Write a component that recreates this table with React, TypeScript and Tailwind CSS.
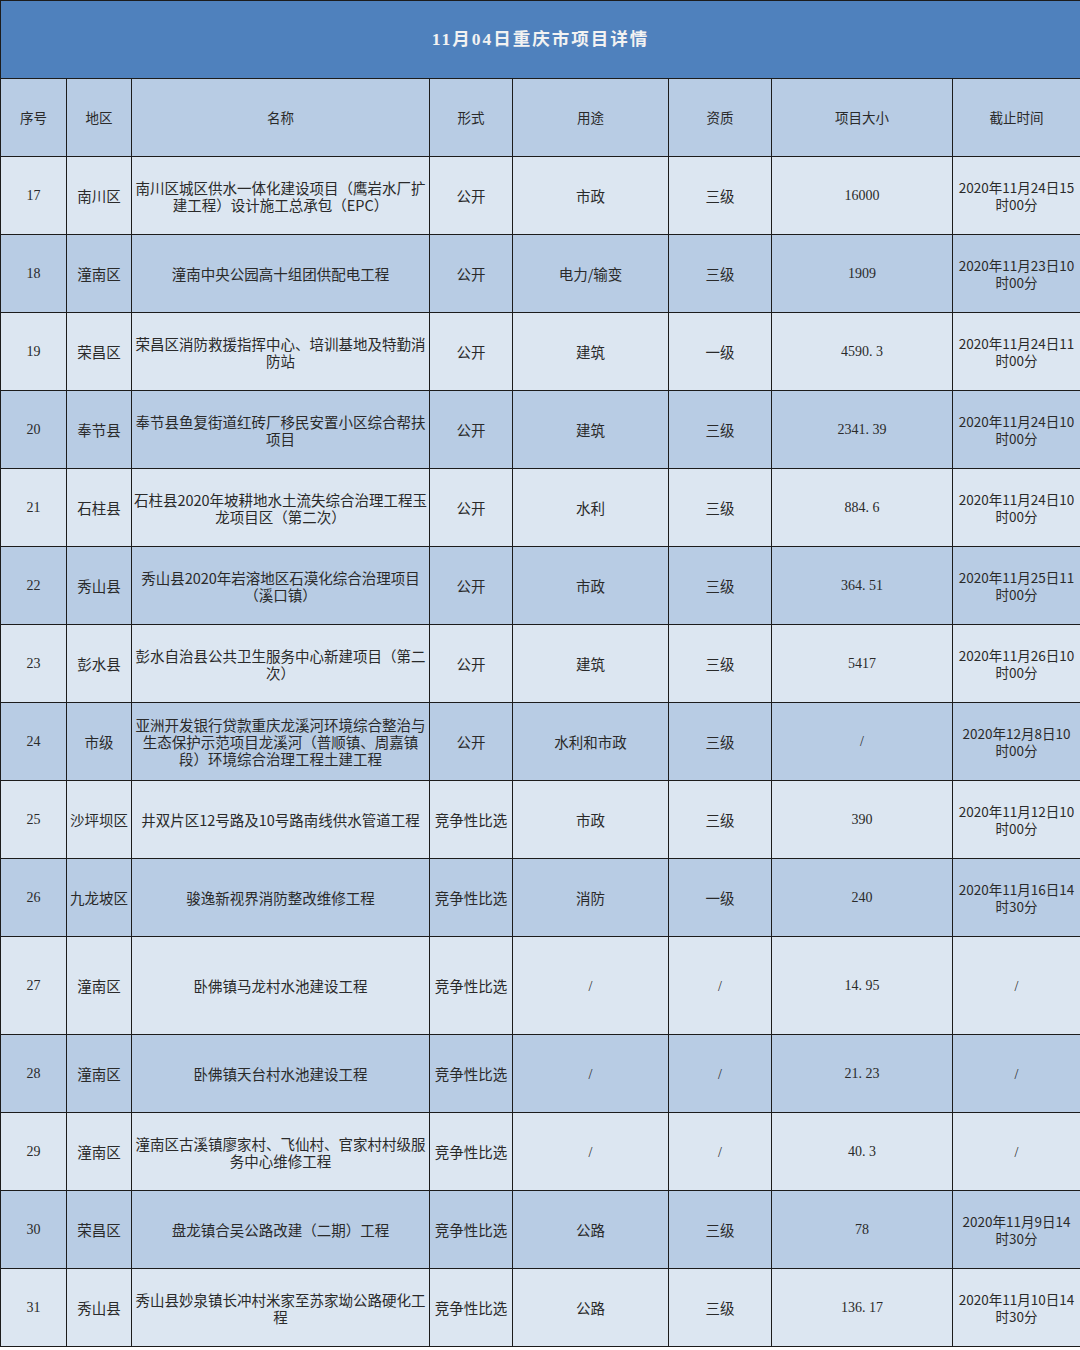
import React from 'react'

type Row = {
  no: number
  area: string
  name: string[]
  form: string
  use: string
  level: string
  size: string
  deadline: string[]
  tall?: boolean
}

const ROWS: Row[] = [
  { no: 17, area: '南川区', name: ['南川区城区供水一体化建设项目（鹰岩水厂扩', '建工程）设计施工总承包（EPC）'], form: '公开', use: '市政', level: '三级', size: '16000', deadline: ['2020年11月24日15', '时00分'] },
  { no: 18, area: '潼南区', name: ['潼南中央公园高十组团供配电工程'], form: '公开', use: '电力/输变', level: '三级', size: '1909', deadline: ['2020年11月23日10', '时00分'] },
  { no: 19, area: '荣昌区', name: ['荣昌区消防救援指挥中心、培训基地及特勤消', '防站'], form: '公开', use: '建筑', level: '一级', size: '4590. 3', deadline: ['2020年11月24日11', '时00分'] },
  { no: 20, area: '奉节县', name: ['奉节县鱼复街道红砖厂移民安置小区综合帮扶', '项目'], form: '公开', use: '建筑', level: '三级', size: '2341. 39', deadline: ['2020年11月24日10', '时00分'] },
  { no: 21, area: '石柱县', name: ['石柱县2020年坡耕地水土流失综合治理工程玉', '龙项目区（第二次）'], form: '公开', use: '水利', level: '三级', size: '884. 6', deadline: ['2020年11月24日10', '时00分'] },
  { no: 22, area: '秀山县', name: ['秀山县2020年岩溶地区石漠化综合治理项目', '（溪口镇）'], form: '公开', use: '市政', level: '三级', size: '364. 51', deadline: ['2020年11月25日11', '时00分'] },
  { no: 23, area: '彭水县', name: ['彭水自治县公共卫生服务中心新建项目（第二', '次）'], form: '公开', use: '建筑', level: '三级', size: '5417', deadline: ['2020年11月26日10', '时00分'] },
  { no: 24, area: '市级', name: ['亚洲开发银行贷款重庆龙溪河环境综合整治与', '生态保护示范项目龙溪河（普顺镇、周嘉镇', '段）环境综合治理工程土建工程'], form: '公开', use: '水利和市政', level: '三级', size: '/', deadline: ['2020年12月8日10', '时00分'] },
  { no: 25, area: '沙坪坝区', name: ['井双片区12号路及10号路南线供水管道工程'], form: '竞争性比选', use: '市政', level: '三级', size: '390', deadline: ['2020年11月12日10', '时00分'] },
  { no: 26, area: '九龙坡区', name: ['骏逸新视界消防整改维修工程'], form: '竞争性比选', use: '消防', level: '一级', size: '240', deadline: ['2020年11月16日14', '时30分'] },
  { no: 27, area: '潼南区', name: ['卧佛镇马龙村水池建设工程'], form: '竞争性比选', use: '/', level: '/', size: '14. 95', deadline: ['/'], tall: true },
  { no: 28, area: '潼南区', name: ['卧佛镇天台村水池建设工程'], form: '竞争性比选', use: '/', level: '/', size: '21. 23', deadline: ['/'] },
  { no: 29, area: '潼南区', name: ['潼南区古溪镇廖家村、飞仙村、官家村村级服', '务中心维修工程'], form: '竞争性比选', use: '/', level: '/', size: '40. 3', deadline: ['/'] },
  { no: 30, area: '荣昌区', name: ['盘龙镇合吴公路改建（二期）工程'], form: '竞争性比选', use: '公路', level: '三级', size: '78', deadline: ['2020年11月9日14', '时30分'] },
  { no: 31, area: '秀山县', name: ['秀山县妙泉镇长冲村米家至苏家坳公路硬化工', '程'], form: '竞争性比选', use: '公路', level: '三级', size: '136. 17', deadline: ['2020年11月10日14', '时30分'] },
]

const HEAD = ['序号', '地区', '名称', '形式', '用途', '资质', '项目大小', '截止时间']
const WIDTHS = [66, 65, 298, 83, 156, 103, 181, 128]

const cell = 'border border-[#1c1c1c] p-0 text-center align-middle'
const num = "font-['Liberation_Serif',serif] text-[14px] whitespace-pre"

function Val({ text }: { text: string }) {
  // slash cells use the thin half-width glyph
  if (text === '/') return <span className={num}>/</span>
  return <span>{text}</span>
}

export default function App() {
  return (
    <div className="w-[1080px] bg-white font-['Noto_Sans_CJK_SC',sans-serif] text-[14.5px] text-[#2a2a2a]">
      <table className="w-[1080px] table-fixed border-collapse">
        <colgroup>
          {WIDTHS.map((w, i) => (
            <col key={i} style={{ width: w }} />
          ))}
        </colgroup>
        <thead>
          <tr className="h-[78px] bg-[#4f81bd]">
            <th
              colSpan={8}
              className={`${cell} font-['Liberation_Serif','Noto_Sans_CJK_SC',serif] text-[17.5px] font-bold tracking-[2px] text-[#f2f2f2]`}
            >
              11月04日重庆市项目详情
            </th>
          </tr>
          <tr className="h-[78px] bg-[#b8cce4]">
            {HEAD.map((h) => (
              <th key={h} className={`${cell} text-[13.5px] font-normal`}>
                {h}
              </th>
            ))}
          </tr>
        </thead>
        <tbody>
          {ROWS.map((r, i) => (
            <tr
              key={r.no}
              className={`${r.tall ? 'h-[98px]' : 'h-[78px]'} ${i % 2 === 0 ? 'bg-[#dce6f1]' : 'bg-[#b8cce4]'}`}
            >
              <td className={`${cell} ${num}`}>{r.no}</td>
              <td className={`${cell} whitespace-nowrap`}>{r.area}</td>
              <td className={`${cell} leading-[17px]`}>
                {r.name.map((l, k) => (
                  <div key={k} className="whitespace-nowrap">{l}</div>
                ))}
              </td>
              <td className={`${cell} whitespace-nowrap`}>{r.form}</td>
              <td className={cell}><Val text={r.use} /></td>
              <td className={cell}><Val text={r.level} /></td>
              <td className={`${cell} ${num}`}>{r.size}</td>
              <td className={`${cell} text-[13.5px] leading-[17px]`}>
                {r.deadline.map((l, k) =>
                  l === '/' ? (
                    <span key={k} className={num}>/</span>
                  ) : (
                    <div key={k} className="whitespace-nowrap">{l}</div>
                  )
                )}
              </td>
            </tr>
          ))}
        </tbody>
      </table>
    </div>
  )
}
